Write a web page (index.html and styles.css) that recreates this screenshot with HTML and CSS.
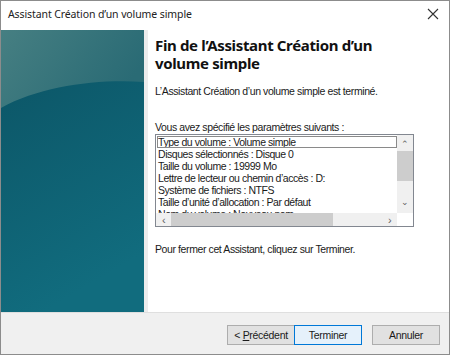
FILE: index.html
```html
<!DOCTYPE html>
<html lang="fr">
<head>
    <meta charset="UTF-8">
    <title>Assistant Création d'un volume simple</title>
    <link rel="stylesheet" href="styles.css">
</head>
<body>
<div class="window">
    <div class="titlebar">
        <span class="title">Assistant Création d’un volume simple</span>
        <svg class="close" width="12" height="12" viewBox="0 0 12 12">
            <path d="M1 1 L11 11 M11 1 L1 11" stroke="#333" stroke-width="1.1" fill="none"/>
        </svg>
    </div>

    <div class="main">
        <div class="sidebar">
            <svg width="143" height="282" viewBox="0 0 143 282" preserveAspectRatio="none">
                <defs>
                    <linearGradient id="base" x1="0" y1="0" x2="0.3" y2="1">
                        <stop offset="0" stop-color="#0b5263"/>
                        <stop offset="1" stop-color="#116c7e"/>
                    </linearGradient>
                    <linearGradient id="gloss" x1="0" y1="0" x2="1" y2="0.4">
                        <stop offset="0" stop-color="#467f82"/>
                        <stop offset="1" stop-color="#2a6b75"/>
                    </linearGradient>
                </defs>
                <rect width="143" height="282" fill="url(#base)"/>
                <path d="M0 0 H143 V52 C95 49 40 56 0 78 Z" fill="url(#gloss)"/>
            </svg>
        </div>

        <div class="content">
            <h1>Fin de l’Assistant Création d’un<br>volume simple</h1>
            <p class="intro">L’Assistant Création d’un volume simple est terminé.</p>

            <p class="label">Vous avez spécifié les paramètres suivants :</p>
            <div class="listbox">
                <div class="list-view">
                    <div class="items">
                        <div class="item focused">Type du volume : Volume simple</div>
                        <div class="item">Disques sélectionnés : Disque 0</div>
                        <div class="item">Taille du volume : 19999 Mo</div>
                        <div class="item">Lettre de lecteur ou chemin d’accès : D:</div>
                        <div class="item">Système de fichiers : NTFS</div>
                        <div class="item">Taille d’unité d’allocation : Par défaut</div>
                        <div class="item">Nom du volume : Nouveau nom</div>
                    </div>
                    <div class="vscroll">
                        <span class="arrow">&#8963;</span>
                        <div class="vthumb"></div>
                        <span class="arrow down">&#8964;</span>
                    </div>
                </div>
                <div class="hscroll">
                    <span class="arrow">&lsaquo;</span>
                    <div class="htrack"><div class="hthumb"></div></div>
                    <span class="arrow">&rsaquo;</span>
                </div>
            </div>

            <p class="closing">Pour fermer cet Assistant, cliquez sur Terminer.</p>
        </div>
    </div>

    <div class="footer">
        <button class="btn">&lt; <u>P</u>récédent</button>
        <button class="btn default">Terminer</button>
        <button class="btn cancel">Annuler</button>
    </div>
</div>
</body>
</html>
```

FILE: styles.css
```css
body {
    margin: 0;
    background: #ffffff;
    font-family: "Liberation Sans", Arial, sans-serif;
    color: #1a1a1a;
}
.window {
    width: 450px;
    height: 355px;
    box-sizing: border-box;
    border: 1px solid #8c8c8c;
    display: flex;
    flex-direction: column;
    background: #ffffff;
}
.titlebar {
    height: 29px;
    display: flex;
    align-items: center;
    justify-content: space-between;
    padding: 0 10px 3px 7px;
    box-sizing: border-box;
}
.title {
    font-family: "Noto Sans", sans-serif;
    font-size: 10.5px;
    letter-spacing: -0.1px;
    color: #222;
}
.main {
    display: flex;
    height: 282px;
}
.sidebar {
    width: 143px;
    border-right: 4px solid #ececec;
    flex-shrink: 0;
}
.sidebar svg {
    display: block;
}
.content {
    padding: 6px 0 0 7px;
    flex: 1;
}
h1 {
    font-family: "Noto Sans", sans-serif;
    font-size: 15px;
    font-weight: bold;
    line-height: 18px;
    letter-spacing: -0.35px;
    margin: 0;
    color: #111;
}
p {
    margin: 0;
    font-size: 10.5px;
    line-height: 12px;
    letter-spacing: -0.4px;
}
.intro {
    margin-top: 13px;
}
.label {
    margin-top: 24px;
}
.listbox {
    width: 259px;
    height: 93px;
    box-sizing: border-box;
    border: 1px solid #828790;
    margin-top: 1px;
    display: flex;
    flex-direction: column;
    font-size: 10.5px;
    letter-spacing: -0.45px;
}
.list-view {
    flex: 1;
    display: flex;
    overflow: hidden;
}
.items {
    flex: 1;
    overflow: hidden;
    padding-top: 1px;
}
.item {
    height: 12px;
    line-height: 12px;
    padding-left: 2px;
    white-space: nowrap;
}
.item.focused {
    outline: 1px solid #8a8a8a;
    outline-offset: -1px;
    margin-left: 1px;
    padding-left: 1px;
}
.vscroll {
    width: 16px;
    background: #f0f0f0;
    display: flex;
    flex-direction: column;
    align-items: center;
}
.vscroll .arrow {
    height: 16px;
    line-height: 18px;
    font-size: 9px;
    color: #606060;
}
.vscroll .arrow.down {
    margin-top: auto;
    line-height: 10px;
}
.vthumb {
    width: 16px;
    height: 30px;
    background: #cdcdcd;
}
.hscroll {
    height: 13px;
    background: #f0f0f0;
    display: flex;
    align-items: center;
    margin-right: 16px;
}
.hscroll .arrow {
    width: 15px;
    text-align: center;
    font-size: 11px;
    color: #606060;
}
.htrack {
    flex: 1;
    height: 13px;
}
.hthumb {
    width: 162px;
    height: 13px;
    background: #cdcdcd;
}
.closing {
    margin-top: 16px;
}
.footer {
    flex: 1;
    background: #f0f0f0;
    border-top: 1px solid #dfdfdf;
    display: flex;
    justify-content: flex-end;
    align-items: center;
    padding: 3px 9px 0 0;
}
.btn {
    width: 68px;
    height: 20px;
    font-family: "Liberation Sans", Arial, sans-serif;
    font-size: 10.5px;
    letter-spacing: -0.3px;
    color: #1a1a1a;
    background: #e1e1e1;
    border: 1px solid #adadad;
    padding: 0;
}
.btn.default {
    background: #e5f1fb;
    border-color: #0078d7;
    margin-left: -1px;
}
.btn.cancel {
    margin-left: 10px;
}
```
